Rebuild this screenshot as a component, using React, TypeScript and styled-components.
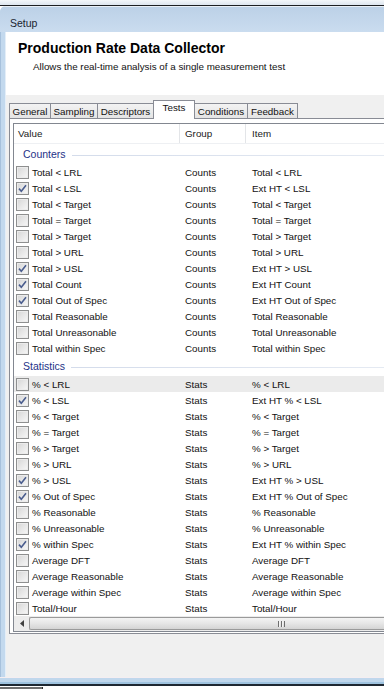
import styled, { createGlobalStyle } from 'styled-components';

const GlobalStyle = createGlobalStyle`
  html, body {
    margin: 0;
    padding: 0;
    background: #ffffff;
  }
  body {
    font-family: 'Liberation Sans', Arial, sans-serif;
    overflow: hidden;
  }
`;

const Page = styled.div`
  width: 384px;
  height: 690px;
  display: flex;
  flex-direction: column;
  overflow: hidden;
  background: #ffffff;
`;

const TopStrip = styled.div`
  height: 5px;
  flex: none;
  background: linear-gradient(#f4f7fa, #dde6ef);
  border-bottom: 1px solid #1d1f22;
`;

const Window = styled.div`
  flex: 1;
  display: flex;
  flex-direction: column;
  min-height: 0;
  background: #c2d7ec;
  border-top-left-radius: 6px;
  overflow: hidden;
`;

const TitleBar = styled.div`
  height: 26px;
  flex: none;
  box-sizing: border-box;
  padding: 10px 0 0 10px;
  background: linear-gradient(#bcd1e7, #cadcef);
  border-top: 1px solid #e9f0f7;
  font-size: 10.5px;
  color: #1b2430;
`;

const ClientRow = styled.div`
  flex: 1;
  display: flex;
  min-height: 0;
`;

const FrameSide = styled.div`
  width: 6px;
  flex: none;
  background: linear-gradient(to right, #a7c1dc 0 1px, #c3d9ee 1px 5px, #e4eef8 5px 6px);
`;

const Client = styled.div`
  flex: 1;
  display: flex;
  flex-direction: column;
  background: #f0f0f0;
  min-width: 0;
`;

const Header = styled.div`
  height: 63px;
  flex: none;
  box-sizing: border-box;
  padding: 8px 0 0 12px;
  background: #ffffff;
`;

const Title = styled.div`
  font-size: 14px;
  font-weight: bold;
  line-height: 17px;
  color: #000;
`;

const Subtitle = styled.div`
  margin: 4px 0 0 15px;
  font-size: 9.8px;
  line-height: 12px;
  color: #111;
`;

const Body = styled.div`
  flex: 1;
  display: flex;
  flex-direction: column;
  padding: 5px 0 0 3px;
`;

const TabStrip = styled.div`
  height: 18px;
  display: flex;
  align-items: flex-end;
`;

const Tab = styled.div<{ $w: number; $active?: boolean }>`
  width: ${(p) => p.$w}px;
  height: ${(p) => (p.$active ? 19 : 15)}px;
  box-sizing: border-box;
  margin-left: -1px;
  margin-bottom: ${(p) => (p.$active ? -1 : 0)}px;
  border: 1px solid #898c95;
  border-bottom: none;
  background: ${(p) => (p.$active ? '#ffffff' : 'linear-gradient(#f3f3f3, #e4e4e4)')};
  position: relative;
  z-index: ${(p) => (p.$active ? 2 : 1)};
  display: flex;
  align-items: ${(p) => (p.$active ? 'flex-start' : 'center')};
  justify-content: center;
  padding-top: ${(p) => (p.$active ? 1 : 0)}px;
  font-size: 9.8px;
  color: #111;
  &:first-child {
    margin-left: 0;
  }
`;

const Panel = styled.div`
  margin-right: -30px;
  height: 516px;
  box-sizing: border-box;
  border: 1px solid #898c95;
  background: #ffffff;
  padding: 4px 0 1px 3px;
`;

const ListView = styled.div`
  border: 1px solid #828790;
  background: #ffffff;
  display: flex;
  flex-direction: column;
`;

const Grid = styled.div`
  display: grid;
  grid-template-columns: 166px 66px 220px;
`;

const HeadRow = styled(Grid)`
  height: 20px;
  border-bottom: 1px solid #eef0f3;
  box-sizing: border-box;
`;

const HeadCell = styled.div<{ $pad: number }>`
  display: flex;
  align-items: center;
  padding-left: ${(p) => p.$pad}px;
  border-right: 1px solid #e3e5e8;
  font-size: 9.8px;
  color: #1a1a1a;
`;

const GroupHeader = styled.div`
  height: 20px;
  display: flex;
  align-items: center;
  padding-left: 9px;
  font-size: 10.5px;
  color: #1e3287;
`;

const GroupLine = styled.span`
  flex: 1;
  height: 1px;
  margin: 2px 0 0 6px;
  background: linear-gradient(to right, #d4dceb, #e6ebf3);
`;

const Row = styled(Grid)<{ $hl?: boolean }>`
  height: 16px;
  background: ${(p) => (p.$hl ? '#ebebeb' : 'transparent')};
`;

const Cell = styled.div<{ $pad: number }>`
  display: flex;
  align-items: center;
  padding-left: ${(p) => p.$pad}px;
  font-size: 9.8px;
  color: #111;
  white-space: nowrap;
  overflow: hidden;
`;

const CheckBox = styled.span`
  width: 13px;
  height: 13px;
  box-sizing: border-box;
  flex: none;
  margin-right: 3px;
  border: 1px solid #8e8f8f;
  background: linear-gradient(135deg, #d6d6d6, #f8f8f8);
  box-shadow: inset 0 0 0 1px #ececec;
  display: flex;
  align-items: center;
  justify-content: center;
`;

const ScrollBar = styled.div`
  height: 15px;
  display: flex;
  background: #ececec;
`;

const ArrowBtn = styled.div`
  width: 15px;
  flex: none;
  display: flex;
  align-items: center;
  justify-content: center;
`;

const Thumb = styled.div`
  flex: 1;
  margin: 1px 0 1px 0;
  border: 1px solid #9a9a9a;
  border-right: none;
  border-radius: 2px 0 0 2px;
  background: linear-gradient(#f4f4f4, #e6e6e6 50%, #d4d4d4);
  display: flex;
  align-items: center;
  padding-left: 248px;
`;

const Grip = styled.span`
  width: 7px;
  height: 6px;
  background: repeating-linear-gradient(to right, #6e6e6e 0 1px, #f2f2f2 1px 2px, transparent 2px 3px);
`;

const Filler = styled.div`
  flex: 1;
`;

const FrameBottom = styled.div`
  height: 7px;
  flex: none;
  background: linear-gradient(#f5eef1 0 1px, #c0d7ec 1px 5px, #9fc3df 5px 7px);
`;

const BottomStrip = styled.div`
  height: 4px;
  flex: none;
  border-top: 2px solid #1e2832;
  background: linear-gradient(#ffffff 0 1px, transparent 1px 3px, #ffffff 3px 4px),
    linear-gradient(to right, #6f6f6f 0 42px, #2a2a2a 42px 43px, #ffffff 43px);
`;

type Item = { value: string; group: string; item: string; checked?: boolean; hl?: boolean };

const counters: Item[] = [
  { value: 'Total < LRL', group: 'Counts', item: 'Total < LRL' },
  { value: 'Total < LSL', group: 'Counts', item: 'Ext HT < LSL', checked: true },
  { value: 'Total < Target', group: 'Counts', item: 'Total < Target' },
  { value: 'Total = Target', group: 'Counts', item: 'Total = Target' },
  { value: 'Total > Target', group: 'Counts', item: 'Total > Target' },
  { value: 'Total > URL', group: 'Counts', item: 'Total > URL' },
  { value: 'Total > USL', group: 'Counts', item: 'Ext HT > USL', checked: true },
  { value: 'Total Count', group: 'Counts', item: 'Ext HT Count', checked: true },
  { value: 'Total Out of Spec', group: 'Counts', item: 'Ext HT Out of Spec', checked: true },
  { value: 'Total Reasonable', group: 'Counts', item: 'Total Reasonable' },
  { value: 'Total Unreasonable', group: 'Counts', item: 'Total Unreasonable' },
  { value: 'Total within Spec', group: 'Counts', item: 'Total within Spec' },
];

const statistics: Item[] = [
  { value: '% < LRL', group: 'Stats', item: '% < LRL', hl: true },
  { value: '% < LSL', group: 'Stats', item: 'Ext HT % < LSL', checked: true },
  { value: '% < Target', group: 'Stats', item: '% < Target' },
  { value: '% = Target', group: 'Stats', item: '% = Target' },
  { value: '% > Target', group: 'Stats', item: '% > Target' },
  { value: '% > URL', group: 'Stats', item: '% > URL' },
  { value: '% > USL', group: 'Stats', item: 'Ext HT % > USL', checked: true },
  { value: '% Out of Spec', group: 'Stats', item: 'Ext HT % Out of Spec', checked: true },
  { value: '% Reasonable', group: 'Stats', item: '% Reasonable' },
  { value: '% Unreasonable', group: 'Stats', item: '% Unreasonable' },
  { value: '% within Spec', group: 'Stats', item: 'Ext HT % within Spec', checked: true },
  { value: 'Average DFT', group: 'Stats', item: 'Average DFT' },
  { value: 'Average Reasonable', group: 'Stats', item: 'Average Reasonable' },
  { value: 'Average within Spec', group: 'Stats', item: 'Average within Spec' },
  { value: 'Total/Hour', group: 'Stats', item: 'Total/Hour' },
];

const tabs = [
  { label: 'General', w: 42 },
  { label: 'Sampling', w: 48 },
  { label: 'Descriptors', w: 57 },
  { label: 'Tests', w: 42, active: true },
  { label: 'Conditions', w: 54 },
  { label: 'Feedback', w: 51 },
];

function Check({ checked }: { checked?: boolean }) {
  return (
    <CheckBox>
      {checked && (
        <svg width="9" height="9" viewBox="0 0 9 9">
          <path d="M1 4.6 L3.3 7.2 L8 1.2" fill="none" stroke="#4a5d8e" strokeWidth="1.6" />
        </svg>
      )}
    </CheckBox>
  );
}

function ItemRow({ row }: { row: Item }) {
  return (
    <Row $hl={row.hl}>
      <Cell $pad={2}>
        <Check checked={row.checked} />
        {row.value}
      </Cell>
      <Cell $pad={5}>{row.group}</Cell>
      <Cell $pad={6}>{row.item}</Cell>
    </Row>
  );
}

export default function App() {
  return (
    <Page>
      <GlobalStyle />
      <TopStrip />
      <Window>
        <TitleBar>Setup</TitleBar>
        <ClientRow>
          <FrameSide />
          <Client>
            <Header>
              <Title>Production Rate Data Collector</Title>
              <Subtitle>Allows the real-time analysis of a single measurement test</Subtitle>
            </Header>
            <Body>
              <TabStrip>
                {tabs.map((t) => (
                  <Tab key={t.label} $w={t.w} $active={t.active}>
                    {t.label}
                  </Tab>
                ))}
              </TabStrip>
              <Panel>
                <ListView>
                  <HeadRow>
                    <HeadCell $pad={4}>Value</HeadCell>
                    <HeadCell $pad={5}>Group</HeadCell>
                    <HeadCell $pad={6}>Item</HeadCell>
                  </HeadRow>
                  <GroupHeader>
                    Counters
                    <GroupLine />
                  </GroupHeader>
                  {counters.map((r) => (
                    <ItemRow key={r.value} row={r} />
                  ))}
                  <GroupHeader>
                    Statistics
                    <GroupLine />
                  </GroupHeader>
                  {statistics.map((r) => (
                    <ItemRow key={r.value} row={r} />
                  ))}
                  <ScrollBar>
                    <ArrowBtn>
                      <svg width="4" height="7" viewBox="0 0 4 7">
                        <path d="M4 0 L0 3.5 L4 7 Z" fill="#404040" />
                      </svg>
                    </ArrowBtn>
                    <Thumb>
                      <Grip />
                    </Thumb>
                  </ScrollBar>
                </ListView>
              </Panel>
              <Filler />
            </Body>
          </Client>
        </ClientRow>
        <FrameBottom />
      </Window>
      <BottomStrip />
    </Page>
  );
}
